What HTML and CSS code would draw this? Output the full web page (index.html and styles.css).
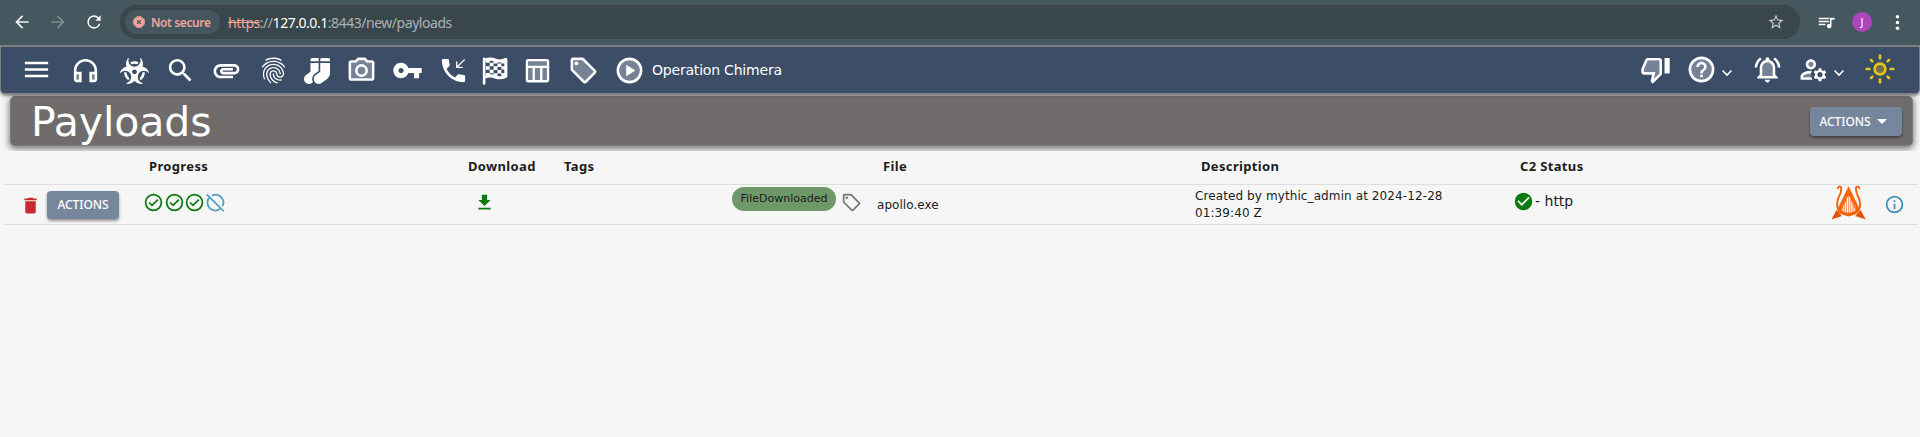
FILE: index.html
```html
<!DOCTYPE html>
<html lang="en">
<head>
<meta charset="utf-8">
<title>Payloads</title>
<link rel="stylesheet" href="styles.css">
</head>
<body>
<header class="browser">
  <svg class="b-icon back" viewBox="0 0 24 24"><path d="M20 11H7.83l5.59-5.59L12 4l-8 8 8 8 1.41-1.41L7.83 13H20v-2z"/></svg>
  <svg class="b-icon forward" viewBox="0 0 24 24"><path d="M12 4l-1.41 1.41L16.17 11H4v2h12.17l-5.58 5.59L12 20l8-8z"/></svg>
  <svg class="b-icon reload" viewBox="0 0 24 24"><path d="M17.65 6.35A7.96 7.96 0 0 0 12 4a8 8 0 1 0 7.73 10h-2.08A6 6 0 1 1 12 6c1.66 0 3.14.69 4.22 1.78L13.5 10.5H20V4z"/></svg>
  <div class="address">
    <span class="insecure">
      <svg viewBox="0 0 14 14"><path fill="#f0a49b" d="M4.5.8h5L13.2 4.5v5L9.5 13.2h-5L.8 9.5v-5z" stroke="#f0a49b" stroke-linejoin="round"/><path d="M4.8 4.8l4.4 4.4m0-4.4L4.8 9.2" stroke="#45565e" stroke-width="1.5"/></svg>
      <span class="insecure-label">Not secure</span>
    </span>
    <span class="url"><s>https</s>://<b>127.0.0.1</b>:8443/new/payloads</span>
    <svg class="star" viewBox="0 0 24 24"><path d="M22 9.24l-7.19-.62L12 2 9.19 8.63 2 9.24l5.46 4.73L5.82 21 12 17.27 18.18 21l-1.63-7.03L22 9.24zM12 15.4l-3.76 2.27 1-4.28-3.32-2.88 4.38-.38L12 6.1l1.71 4.04 4.38.38-3.32 2.88 1 4.28L12 15.4z"/></svg>
  </div>
  <svg class="queue" viewBox="0 0 24 24"><path d="M1 5h14v2H1zm0 4h14v2H1zm0 4h9v2H1zM16 5h6v2.5h-4V16a3 3 0 1 1-2-2.8z"/></svg>
  <span class="avatar">J</span>
  <svg class="more" viewBox="0 0 24 24"><circle cx="12" cy="4" r="2.5"/><circle cx="12" cy="12" r="2.5"/><circle cx="12" cy="20" r="2.5"/></svg>
</header>

<nav class="toolbar">
  <div class="tools">
    <svg class="menu" viewBox="0 0 24 24"><path d="M3 18h18v-2H3v2zm0-5h18v-2H3v2zm0-7v2h18V6H3z"/></svg>
    <svg viewBox="0 0 24 24"><path opacity=".3" d="M5 15h2v4H5zm12 0h2v4h-2z"/><path d="M12 3c-4.97 0-9 4.03-9 9v7c0 1.1.9 2 2 2h4v-8H5v-1c0-3.87 3.13-7 7-7s7 3.13 7 7v1h-4v8h4c1.1 0 2-.9 2-2v-7c0-4.97-4.03-9-9-9zM7 15v4H5v-4h2zm12 4h-2v-4h2v4z"/></svg>
    <svg class="biohazard" viewBox="0 0 576 512"><path d="M287.9 112c18.6 0 36.2 3.8 52.8 9.6 13.3-10.3 23.6-24.3 29.5-40.7-25.2-10.9-53-17-82.2-17-29.1 0-56.9 6-82.1 16.9 5.9 16.4 16.2 30.4 29.5 40.7 16.5-5.7 34-9.5 52.5-9.5zM163.6 438.7c12-11.8 20.4-26.4 24.5-42.4-32.9-26.4-54.8-65.3-58.9-109.6-8.5-2.8-17.2-4.6-26.4-4.6-7.6 0-15.2 1-22.5 3.1 4.1 62.8 35.8 118 83.3 153.5zm224.2-42.6c4.1 16 12.5 30.7 24.5 42.5 47.4-35.5 79.1-90.7 83-153.5-7.2-2-14.7-3-22.2-3-9.2 0-18 1.9-26.6 4.7-4.1 44.2-26 82.9-58.7 109.3zm113.5-205c-17.6-10.4-36.3-16.6-55.3-19.9 6-17.7 10-36.4 10-56.2 0-41-14.5-80.8-41-112.2-2.5-3-6.6-3.7-10-1.8-3.3 1.9-4.8 6-3.6 9.7 4.5 13.8 6.6 26.3 6.6 38.5 0 67.8-53.8 122.9-120 122.9S168 117 168 49.2c0-12.1 2.2-24.7 6.6-38.5 1.2-3.7-.3-7.8-3.6-9.7-3.4-1.9-7.5-1.2-10 1.8C134.6 34.2 120 74 120 115c0 19.8 3.9 38.5 10 56.2-18.9 3.3-37.7 9.5-55.3 19.9-34.6 20.5-61 53.3-74.3 92.4-1.3 3.7.2 7.7 3.5 9.8 3.3 2 7.5 1.3 10-1.6 9.4-10.8 19-19.1 29.2-25.1 57.3-33.9 130.8-13.7 163.9 45 33.1 58.7 13.4 134-43.9 167.9-10.2 6.1-22 10.4-35.8 13.4-3.7.8-6.4 4.2-6.4 8.1.1 4 2.7 7.3 6.5 8 39.7 7.8 80.6.8 115.2-19.7 18-10.6 32.9-24.5 45.3-40.1 12.4 15.6 27.3 29.5 45.3 40.1 34.6 20.5 75.5 27.5 115.2 19.7 3.8-.7 6.4-4 6.5-8 0-3.9-2.6-7.3-6.4-8.1-13.9-2.9-25.6-7.3-35.8-13.4-57.3-33.9-77-109.2-43.9-167.9s106.6-78.9 163.9-45c10.2 6.1 19.8 14.3 29.2 25.1 2.5 2.9 6.7 3.6 10 1.6s4.8-6.1 3.5-9.8c-13.1-39.1-39.5-72-74.1-92.4zm-213.4 129c-26.5 0-48-21.5-48-48s21.5-48 48-48 48 21.5 48 48-21.5 48-48 48z"/></svg>
    <svg class="search" viewBox="0 0 24 24"><path d="M15.5 14h-.79l-.28-.27C15.41 12.59 16 11.11 16 9.5 16 5.91 13.09 3 9.5 3S3 5.91 3 9.5 5.91 16 9.5 16c1.61 0 3.09-.59 4.23-1.57l.27.28v.79l5 4.99L20.49 19l-4.99-5zm-6 0C7.01 14 5 11.99 5 9.5S7.01 5 9.5 5 14 7.01 14 9.5 11.99 14 9.5 14z"/></svg>
    <svg viewBox="0 0 24 24"><path d="M2 12.5C2 9.46 4.46 7 7.5 7H18c2.21 0 4 1.79 4 4s-1.79 4-4 4H9.5C8.12 15 7 13.88 7 12.5S8.12 10 9.5 10H17v2H9.41c-.55 0-.55 1 0 1H18c1.1 0 2-.9 2-2s-.9-2-2-2H7.5C5.57 9 4 10.57 4 12.5S5.57 16 7.5 16H17v2H7.5C4.46 18 2 15.54 2 12.5z"/></svg>
    <svg viewBox="0 0 24 24"><path d="M17.81 4.47c-.08 0-.16-.02-.23-.06C15.66 3.42 14 3 12.01 3c-1.98 0-3.86.47-5.57 1.41-.24.13-.54.04-.68-.2-.13-.24-.04-.55.2-.68C7.82 2.52 9.86 2 12.01 2c2.13 0 3.99.47 6.03 1.52.25.13.34.43.21.67-.09.18-.26.28-.44.28zM3.5 9.72c-.1 0-.2-.03-.29-.09-.23-.16-.28-.47-.12-.7.99-1.4 2.25-2.5 3.75-3.27C9.98 4.04 14 4.03 17.15 5.65c1.5.77 2.76 1.86 3.75 3.25.16.22.11.54-.12.7-.23.16-.54.11-.7-.12-.9-1.26-2.04-2.25-3.39-2.94-2.87-1.47-6.54-1.47-9.4.01-1.36.7-2.5 1.7-3.4 2.96-.08.14-.23.21-.39.21zm6.25 12.07c-.13 0-.26-.05-.35-.15-.87-.87-1.34-1.43-2.01-2.64-.69-1.23-1.05-2.73-1.05-4.34 0-2.97 2.54-5.39 5.66-5.39s5.66 2.42 5.66 5.39c0 .28-.22.5-.5.5s-.5-.22-.5-.5c0-2.42-2.09-4.39-4.66-4.39-2.57 0-4.66 1.97-4.66 4.39 0 1.44.32 2.77.93 3.85.64 1.15 1.08 1.64 1.85 2.42.19.2.19.51 0 .71-.11.1-.24.15-.37.15zm7.17-1.85c-1.19 0-2.24-.3-3.1-.89-1.49-1.01-2.38-2.65-2.38-4.39 0-.28.22-.5.5-.5s.5.22.5.5c0 1.41.72 2.74 1.94 3.56.71.48 1.54.71 2.54.71.24 0 .64-.03 1.04-.1.27-.05.53.13.58.41.05.27-.13.53-.41.58-.57.11-1.07.12-1.21.12zM14.91 22c-.04 0-.09-.01-.13-.02-1.59-.44-2.63-1.03-3.72-2.1-1.4-1.39-2.17-3.24-2.17-5.22 0-1.62 1.38-2.94 3.08-2.94 1.7 0 3.08 1.32 3.08 2.94 0 1.07.93 1.94 2.08 1.94s2.08-.87 2.08-1.94c0-3.77-3.25-6.83-7.25-6.83-2.84 0-5.44 1.58-6.61 4.03-.39.81-.59 1.76-.59 2.8 0 .78.07 2.01.67 3.61.1.26-.03.55-.29.64-.26.1-.55-.04-.64-.29-.49-1.31-.73-2.61-.73-3.96 0-1.2.23-2.29.68-3.24 1.33-2.79 4.28-4.6 7.51-4.6 4.55 0 8.25 3.51 8.25 7.83 0 1.62-1.38 2.94-3.08 2.94s-3.08-1.32-3.08-2.94c0-1.07-.93-1.94-2.08-1.94s-2.08.87-2.08 1.94c0 1.71.66 3.31 1.87 4.51.95.94 1.86 1.46 3.27 1.85.27.07.42.35.35.61-.05.23-.26.38-.47.38z"/></svg>
    <svg class="socks" viewBox="0 0 512 512"><path d="M214.66 311.01L288 256V96H128v176l-86.65 64.61c-39.4 29.56-53.86 84.42-29.21 127.06C30.39 495.25 63.27 512 96.08 512c20.03 0 40.25-6.25 57.52-19.2l21.86-16.39c-29.85-55.38-13.54-125.84 39.2-165.4zM288 32c0-11.05 3.07-21.3 8.02-30.38C293.4.92 290.85 0 288 0H160c-17.67 0-32 14.33-32 32v32h160V32zM480 0H352c-17.67 0-32 14.33-32 32v32h192V32c0-17.67-14.33-32-32-32zM320 272l-86.13 64.61c-39.4 29.56-53.86 84.42-29.21 127.06 18.25 31.58 50.61 48.33 83.42 48.33 20.03 0 40.25-6.25 57.52-19.2l115.2-86.4A128 128 0 0 0 512 304V96H320v176z"/></svg>
    <svg viewBox="0 0 24 24"><path opacity=".3" d="M20 6h-4.05l-1.83-2H9.88L8.05 6H4v12h16V6z"/><path d="M4 20h16c1.1 0 2-.9 2-2V6c0-1.1-.9-2-2-2h-3.17L15 2H9L7.17 4H4c-1.1 0-2 .9-2 2v12c0 1.1.9 2 2 2zM4 6h4.05l1.83-2h4.24l1.83 2H20v12H4V6zm8 1a5 5 0 1 0 0 10 5 5 0 0 0 0-10zm0 8a3 3 0 1 1 0-6 3 3 0 0 1 0 6z"/></svg>
    <svg viewBox="0 0 24 24"><path d="M12.65 10C11.83 7.67 9.61 6 7 6c-3.31 0-6 2.69-6 6s2.69 6 6 6c2.61 0 4.83-1.67 5.65-4H17v4h4v-4h2v-4H12.65zM7 14c-1.1 0-2-.9-2-2s.9-2 2-2 2 .9 2 2-.9 2-2 2z"/></svg>
    <svg viewBox="0 0 24 24"><path d="M20 15.5c-1.25 0-2.45-.2-3.57-.57-.35-.11-.74-.03-1.02.24l-2.2 2.2c-2.83-1.44-5.15-3.75-6.59-6.58l2.2-2.21c.28-.27.36-.66.25-1.01C8.7 6.45 8.5 5.25 8.5 4c0-.55-.45-1-1-1H4c-.55 0-1 .45-1 1 0 9.39 7.61 17 17 17 .55 0 1-.45 1-1v-3.5c0-.55-.45-1-1-1zM21 3.7l-.7-.7L15 8.3V5h-1v5h5V9h-3.3z"/></svg>
    <svg viewBox="0 0 24 24"><path d="M3.2 3v19" stroke="#fff" stroke-width="2" stroke-linecap="round"/><path d="M4 4c3-1.200 5.500-1 8 0s4.500 1 8-.5V16.500c-3.500 1.500-5.500 1.500-8 .5s-5-1.200-8 0" fill="none" stroke="#fff" stroke-width="2.400" stroke-linejoin="round"/><path d="M7.500 6h3v2.700h-3zM13.500 6.600h3v2.700h-3zM4.500 8.700h3v2.700h-3zM10.500 8.800h3v2.800h-3zM16.500 8.700h3v2.600h-3zM7.500 11.400h3v2.700h-3zM13.500 11.700h3v2.700h-3zM4.500 14h3v2h-3zM10.500 14.100h3v2.600h-3zM16.500 14h3v2.500h-3zM4.500 4h3v2h-3zM10.500 4h3v2.600h-3zM16.500 4h3v2.500h-3z"/></svg>
    <svg viewBox="0 0 24 24"><path opacity=".3" d="M4 4h16v16H4z"/><path fill="none" stroke="#fff" stroke-width="1.8" d="M5 3.900h14q1.200 0 1.200 1.200v14q0 1.200-1.200 1.200H5q-1.200 0-1.200-1.200v-14Q3.800 3.900 5 3.900zM4 9.200h16M9.100 9.200v11M14.900 9.200v11"/></svg>
    <svg viewBox="0 0 24 24"><path opacity=".3" d="M11 4H4v7l9 9.010L20 13z"/><path d="M21.41 11.58l-9-9C12.05 2.22 11.55 2 11 2H4c-1.1 0-2 .9-2 2v7c0 .55.22 1.05.59 1.42l9 9c.36.36.86.58 1.41.58s1.05-.22 1.41-.59l7-7c.37-.36.59-.86.59-1.41s-.23-1.06-.59-1.42zM13 20.01L4 11V4h7l9 9-7 7.01z"/><circle cx="6.5" cy="6.5" r="1.5"/></svg>
    <svg viewBox="0 0 24 24"><circle cx="12" cy="12" r="9" fill="#fff" fill-opacity=".3" stroke="#fff" stroke-width="2"/><path d="M9.5 16.5l7-4.500-7-4.500z"/></svg>
  </div>
  <span class="operation">Operation Chimera</span>
  <div class="user-tools">
    <svg viewBox="0 0 24 24"><path opacity=".3" d="M3 12v2h9l-1.34 5.34L15 15V5H6z"/><path d="M15 3H6c-.83 0-1.54.5-1.84 1.22l-3.02 7.05c-.09.23-.14.47-.14.73v2c0 1.1.9 2 2 2h6.31l-.95 4.57-.03.32c0 .41.17.79.44 1.06L9.83 23l6.59-6.59c.36-.36.58-.86.58-1.41V5c0-1.1-.9-2-2-2zm0 12l-4.34 4.34L12 14H3v-2l3-7h9v10zm4-12h4v12h-4z"/></svg>
    <svg class="help" viewBox="0 0 24 24"><circle cx="12" cy="12" r="9" fill="#fff" fill-opacity=".3" stroke="#fff" stroke-width="2"/><path d="M11 16h2v2h-2zm1-10c-2.21 0-4 1.79-4 4h2c0-1.1.9-2 2-2s2 .9 2 2c0 2-3 1.75-3 5h2c0-2.25 3-2.5 3-5 0-2.21-1.79-4-4-4z"/></svg>
    <svg class="chevron" viewBox="0 0 12 8"><path d="M1.5 1.5L6 6l4.500-4.500" fill="none" stroke="#fff" stroke-width="1.6"/></svg>
    <svg class="bell" viewBox="0 0 24 24"><path opacity=".3" d="M12 6.5c-2.49 0-4 2.02-4 4.5v6h8v-6c0-2.48-1.51-4.5-4-4.5z"/><path d="M18 16v-5c0-3.07-1.63-5.64-4.5-6.32V4c0-.83-.67-1.5-1.5-1.5s-1.5.67-1.5 1.5v.68C7.64 5.36 6 7.92 6 11v5l-2 2v1h16v-1l-2-2zm-2 1H8v-6c0-2.48 1.51-4.5 4-4.5s4 2.02 4 4.5v6zm-4 5c1.1 0 2-.9 2-2h-4c0 1.1.9 2 2 2zM7.58 4.08L6.15 2.65C3.75 4.48 2.17 7.3 2.03 10.5h2c.15-2.65 1.51-4.97 3.55-6.42zm12.39 6.42h2c-.15-3.2-1.73-6.02-4.12-7.85l-1.42 1.43c2.02 1.45 3.39 3.77 3.54 6.42z"/></svg>
    <svg class="account" viewBox="0 0 24 24"><circle opacity=".3" cx="10" cy="8" r="2.5"/><path opacity=".3" d="M4 18v-.65c0-.34.16-.66.41-.81C6.1 15.53 8.03 15 10 15l.28 3z"/><path d="M4 18v-.65c0-.34.16-.66.41-.81C6.1 15.53 8.03 15 10 15c.03 0 .05 0 .08.01.1-.7.3-1.37.59-1.98-.22-.02-.44-.03-.67-.03-2.42 0-4.68.67-6.61 1.82-.88.52-1.39 1.5-1.39 2.53V20h9.26c-.42-.6-.75-1.28-.97-2H4zM10 12c2.21 0 4-1.79 4-4s-1.79-4-4-4-4 1.79-4 4 1.79 4 4 4zm0-6c1.1 0 2 .9 2 2s-.9 2-2 2-2-.9-2-2 .9-2 2-2zM20.75 16c0-.22-.03-.42-.06-.63l1.14-1.01-1-1.73-1.45.49c-.32-.27-.68-.48-1.08-.63L18 11h-2l-.3 1.49c-.4.15-.76.36-1.08.63l-1.45-.49-1 1.73 1.14 1.01c-.03.21-.06.41-.06.63s.03.42.06.63l-1.14 1.01 1 1.73 1.45-.49c.32.27.68.48 1.08.63L16 21h2l.3-1.49c.4-.15.76-.36 1.08-.63l1.45.49 1-1.73-1.14-1.01c.03-.21.06-.41.06-.63zM17 18c-1.1 0-2-.9-2-2s.9-2 2-2 2 .9 2 2-.9 2-2 2z"/></svg>
    <svg class="chevron" viewBox="0 0 12 8"><path d="M1.5 1.5L6 6l4.500-4.500" fill="none" stroke="#fff" stroke-width="1.6"/></svg>
    <svg class="sun" viewBox="0 0 24 24"><circle cx="12" cy="12" r="4" fill="#e8c818" fill-opacity=".3"/><path stroke-linecap="round" d="M12 2v2M12 20v2M2 12h2M20 12h2M5.300 5.300l1 1M17.700 17.700l1 1M5.300 18.700l1-1M17.700 6.300l1-1"/></svg>
  </div>
</nav>

<main>
  <section class="banner">
    <h1>Payloads</h1>
    <button class="btn btn-menu">ACTIONS<i class="caret"></i></button>
  </section>

  <section class="table">
    <div class="row head">
      <span></span><span>Progress</span><span>Download</span><span>Tags</span><span>File</span><span>Description</span><span>C2 Status</span><span></span>
    </div>
    <div class="row body">
      <div class="cell controls">
        <svg class="trash" viewBox="0 0 24 24"><path d="M6 19c0 1.1.9 2 2 2h8c1.1 0 2-.9 2-2V7H6v12zM19 4h-3.500l-1-1h-5l-1 1H5v2h14V4z"/></svg>
        <button class="btn">ACTIONS</button>
      </div>
      <div class="cell progress">
        <svg class="ok" viewBox="0 0 24 24"><circle cx="12" cy="12" r="9"/><path d="M7 12l3.300 3.300 6.700-6.700"/></svg>
        <svg class="ok" viewBox="0 0 24 24"><circle cx="12" cy="12" r="9"/><path d="M7 12l3.300 3.300 6.700-6.700"/></svg>
        <svg class="ok" viewBox="0 0 24 24"><circle cx="12" cy="12" r="9"/><path d="M7 12l3.300 3.300 6.700-6.700"/></svg>
        <svg class="off" viewBox="0 0 24 24"><path d="M2 2.600L21.400 22M8 4a9 9 0 0 1 12 12.200M4.800 6.500A9 9 0 0 0 17.300 19.300"/></svg>
      </div>
      <div class="cell download">
        <svg viewBox="0 0 24 24"><path d="M19 9h-4V3H9v6H5l7 7 7-7zM5 18v2h14v-2H5z"/></svg>
      </div>
      <div class="cell tags">
        <span class="chip">FileDownloaded</span>
        <svg viewBox="0 0 24 24"><path d="M21.41 11.58l-9-9C12.05 2.22 11.55 2 11 2H4c-1.1 0-2 .9-2 2v7c0 .55.22 1.05.59 1.42l9 9c.36.36.86.58 1.41.58s1.05-.22 1.41-.59l7-7c.37-.36.59-.86.59-1.41s-.23-1.06-.59-1.42zM13 20.01L4 11V4h7l9 9-7 7.01z"/><circle cx="6.5" cy="6.5" r="1.5"/></svg>
      </div>
      <div class="cell file">apollo.exe</div>
      <div class="cell description"><span>Created by mythic_admin at 2024-12-28</span><span class="zone">01:39:40 Z</span></div>
      <div class="cell status">
        <svg viewBox="0 0 24 24"><path d="M12 2a10 10 0 1 0 0 20 10 10 0 0 0 0-20zm-2 15l-5-5 1.410-1.410L10 14.170l7.590-7.590L19 8l-9 9z"/></svg>
        <span>- http</span>
      </div>
      <div class="cell agent">
        <svg class="lyre" viewBox="0 0 36 36">
          <path d="M.5 34.500L5.500 25l5.500 6zM34.700 34.500L29.700 25l-5.500 6z" fill="#e05206"/>
          <path d="M17.600 1.200L7 23l3 4 7.600-17 7.600 17 3-4z"/>
          <path d="M6.800 3.200Q7.400 1.200 9 1.700T10.200 4.500Q10 8 8.300 11T6.200 18t1.300 7.500Q11 29.500 17.600 30q6.600-.5 10.100-4.500Q29.500 22 29 18t-2.100-7T25 4.500q-.4-2.300 1.200-2.800t2.200 1.500" fill="none" stroke="#f8620a" stroke-width="1.900" stroke-linecap="round"/>
          <path d="M11 19.500v8M13.200 15.500v13M15.400 12v17M17.600 10.500v18.500M19.800 12v17M22 15.500v13M24.200 19.500v8" stroke="#f7925a" stroke-width="1"/>
          <path d="M6 21.500q5 5.500 11.600 6.500 6.600-1 11.600-6.500-.5 6-11.600 10Q6.500 27.500 6 21.500z"/>
        </svg>
        <svg class="info" viewBox="0 0 24 24"><circle cx="12" cy="12" r="9" fill="none" stroke="#3f8fb8" stroke-width="2"/><path d="M11 7h2v2h-2zM11 11h2v6h-2z"/></svg>
      </div>
    </div>
  </section>
</main>
</body>
</html>
```
FILE: styles.css
```css
* { box-sizing: border-box; }
body { margin: 0; width: 1920px; height: 437px; overflow: hidden; background: #f6f6f6; font-family: "DejaVu Sans", sans-serif; color: #1c1c1c; }
svg { display: block; flex: none; }

/* Browser chrome */
.browser { display: flex; align-items: center; height: 45px; background: #45575f; padding-left: 12px; font-family: "Noto Sans", sans-serif; }
.b-icon { width: 20px; height: 20px; fill: #f2f5f6; margin-right: 16px; margin-top: -1px; }
.forward { fill: #7f8d93; }
.address { display: flex; align-items: center; width: 1680px; height: 34px; margin-top: -1px; padding: 0 15px 0 5px; border-radius: 17px; background: #39464c; }
.insecure { display: flex; align-items: center; width: 95px; height: 24px; border-radius: 12px; background: #45565e; padding-left: 8px; gap: 6px; color: #f0a49b; font-size: 12px; font-weight: 600; letter-spacing: -.4px; white-space: nowrap; }
.insecure svg { width: 12px; height: 12px; }
.url { margin-left: 8px; font-size: 14px; letter-spacing: -.46px; color: #a9b3b7; white-space: nowrap; }
.url s { color: #f0a49b; }
.url b { color: #fff; font-weight: 400; }
.star { width: 18px; height: 18px; margin-left: auto; fill: #c5ccd0; }
.queue { width: 18px; height: 18px; margin-left: 18px; fill: #fff; }
.avatar { width: 20px; height: 20px; margin: -1px 0 0 16px; border-radius: 50%; background: #ab47bc; color: #fff; font-size: 11px; line-height: 20px; text-align: center; }
.more { width: 17px; height: 17px; margin: -1px 0 0 17px; fill: #fff; }

/* Application toolbar */
.toolbar { position: relative; z-index: 1; display: flex; align-items: center; height: 49px; border: 1px solid #807f80; border-top-width: 2px; border-radius: 0 0 5px 5px; background: #3c4d67; padding: 2px 0 0 20px; box-shadow: 0 2px 3px rgba(0,0,0,.45); }
.toolbar svg { width: 31px; height: 31px; fill: #fff; }
.tools { display: grid; grid-template-columns: 49px 50px 45px 46px 47px 44px 44px 46px 46px 42px 42px 46px 46px 31px; align-items: center; margin-top: -1px; }
.tools .menu { margin-top: -2px; }
.toolbar .biohazard { width: 29px; height: 26px; }
.toolbar .socks { width: 26px; height: 26px; margin-left: 2px; }
.operation { margin: -2px 0 0 7px; color: #fff; font-size: 14px; letter-spacing: -.2px; white-space: nowrap; }
.user-tools { display: flex; align-items: center; margin: -4px 0 0 auto; padding-right: 23px; }
.user-tools .help { margin-left: 15px; }
.toolbar .chevron { width: 12px; height: 8px; margin: 8px 0 0 4px; }
.user-tools .bell { margin-left: 19px; }
.user-tools .account { margin-left: 15px; }
.toolbar .sun { width: 32px; height: 32px; margin-left: 19px; fill: none; stroke: #e8c818; stroke-width: 2; }

/* Page banner */
main { display: flex; flex-direction: column; background: #f6f6f6; }
.banner { display: flex; align-items: center; justify-content: space-between; height: 50px; margin: 2px 7px 0 10px; padding: 0 10px 0 20px; border-radius: 5px; background: #706c6c; border: 1px solid #7c797a; box-shadow: 0 2px 6px 1px rgba(0,0,0,.5); }
h1 { margin: 3px 0 0; color: #fff; font-size: 41px; line-height: 47px; font-weight: 400; letter-spacing: -.1px; white-space: nowrap; }
.btn { display: flex; align-items: center; justify-content: center; width: 72px; height: 28px; padding: 0; border: 0; border-radius: 4px; background: #76869d; color: #fff; font-family: "Noto Sans", sans-serif; font-size: 12px; font-weight: 500; letter-spacing: -.05px; box-shadow: 0 2px 3px rgba(0,0,0,.4); }
.btn-menu { width: 92px; height: 29px; padding-right: 6px; }
.caret { margin-left: 6px; border: 5px solid transparent; border-top-color: #fff; border-bottom: 0; }

/* Payload table */
.table { position: relative; margin: 5px 2px 0 5px; background: #f6f6f6; }
.row { display: grid; grid-template-columns: 139px 319px 96px 319px 318px 319px 315px 1fr; border-bottom: 1px solid #dedede; }
.head { height: 34px; line-height: 30px; font-family: "Noto Sans", sans-serif; font-size: 13px; font-weight: 700; letter-spacing: .35px; white-space: nowrap; }
.head span { padding-left: 5px; }
.body { height: 40px; }
.cell { display: flex; }
.controls { align-items: center; padding-left: 15px; gap: 6px; }
.controls .btn { margin-top: -1px; }
.trash { width: 21px; height: 21px; fill: #c62b30; }
.progress { padding-top: 7px; margin-left: -1px; }
.progress svg { width: 21px; height: 21px; fill: none; stroke-width: 2; margin-right: -.5px; }
.progress .ok { stroke: #0c7a0c; }
.progress .off { stroke: #4f9cc4; }
.download { padding: 7px 0 0 11px; }
.download svg { width: 21px; height: 21px; fill: #0c7a0c; }
.tags { justify-content: flex-end; padding: 2px 16px 0 0; gap: 5px; }
.tags svg { width: 21px; height: 21px; margin-top: 5px; fill: #777; }
.chip { width: 104px; height: 24px; border-radius: 12px; background: #6f9868; font-size: 11px; line-height: 24px; text-align: center; }
.file { margin-left: -1px; font-size: 12px; line-height: 40px; letter-spacing: .05px; }
.description { flex-direction: column; margin-left: -1px; padding-top: 3px; font-size: 12px; line-height: 17px; letter-spacing: .1px; white-space: nowrap; }
.status { margin-left: -2px; padding-top: 6px; font-size: 14px; line-height: 21px; gap: 1px; }
.status svg { width: 21px; height: 21px; fill: #0c7a0c; }
.agent { gap: 17px; padding-left: 1px; }
.lyre { width: 36px; height: 36px; fill: #f8620a; }
.info { width: 21px; height: 21px; margin-top: 9px; fill: #3f8fb8; }
```
